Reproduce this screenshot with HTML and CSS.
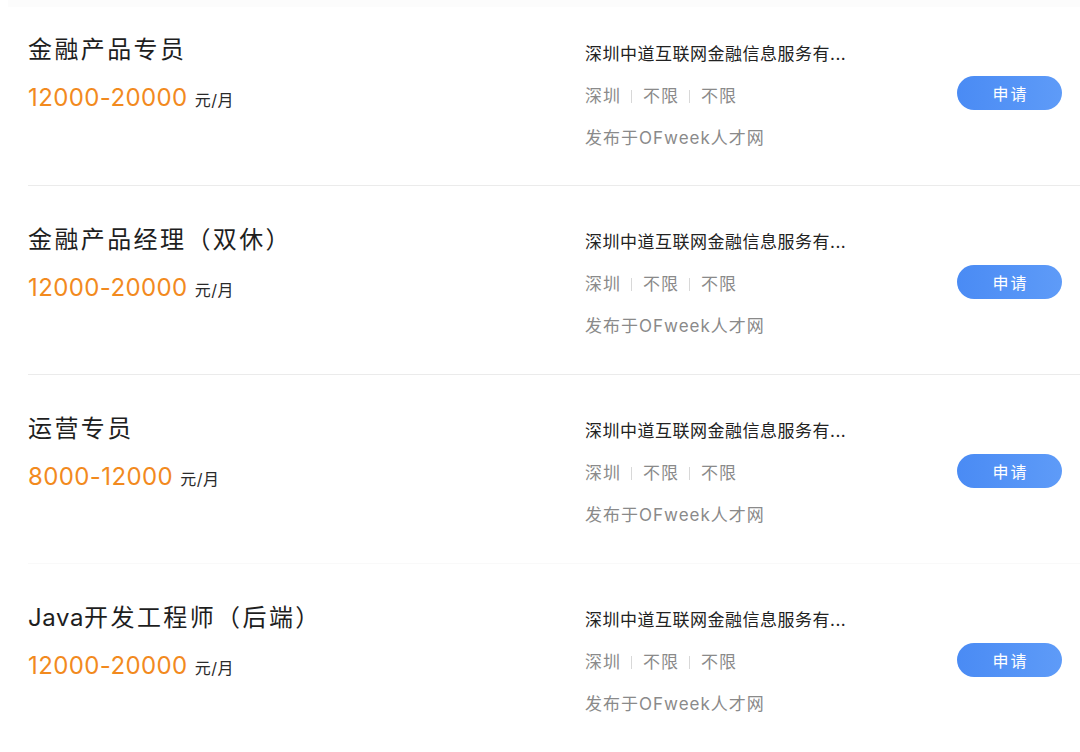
FILE: index.html
```html
<!DOCTYPE html>
<html lang="zh-CN">
<head>
<meta charset="utf-8">
<title>职位列表</title>
<link rel="stylesheet" href="styles.css">
</head>
<body>
<div class="topline"></div>
<ul class="list">
  <li class="row first">
    <div class="left">
      <div class="title">金融产品专员</div>
      <div class="salary"><span class="amount">12000-20000</span><span class="unit">元/月</span></div>
    </div>
    <div class="right">
      <div class="company">深圳中道互联网金融信息服务有...</div>
      <div class="meta"><span>深圳</span><i class="sep"></i><span>不限</span><i class="sep"></i><span>不限</span></div>
      <div class="meta">发布于OFweek人才网</div>
    </div>
    <button class="apply">申请</button>
  </li>
  <li class="row">
    <div class="left">
      <div class="title">金融产品经理（双休）</div>
      <div class="salary"><span class="amount">12000-20000</span><span class="unit">元/月</span></div>
    </div>
    <div class="right">
      <div class="company">深圳中道互联网金融信息服务有...</div>
      <div class="meta"><span>深圳</span><i class="sep"></i><span>不限</span><i class="sep"></i><span>不限</span></div>
      <div class="meta">发布于OFweek人才网</div>
    </div>
    <button class="apply">申请</button>
  </li>
  <li class="row faint">
    <div class="left">
      <div class="title">运营专员</div>
      <div class="salary"><span class="amount">8000-12000</span><span class="unit">元/月</span></div>
    </div>
    <div class="right">
      <div class="company">深圳中道互联网金融信息服务有...</div>
      <div class="meta"><span>深圳</span><i class="sep"></i><span>不限</span><i class="sep"></i><span>不限</span></div>
      <div class="meta">发布于OFweek人才网</div>
    </div>
    <button class="apply">申请</button>
  </li>
  <li class="row">
    <div class="left">
      <div class="title"><span class="latin">Java</span>开发工程师（后端）</div>
      <div class="salary"><span class="amount">12000-20000</span><span class="unit">元/月</span></div>
    </div>
    <div class="right">
      <div class="company">深圳中道互联网金融信息服务有...</div>
      <div class="meta"><span>深圳</span><i class="sep"></i><span>不限</span><i class="sep"></i><span>不限</span></div>
      <div class="meta">发布于OFweek人才网</div>
    </div>
    <button class="apply">申请</button>
  </li>
</ul>
</body>
</html>
```
FILE: styles.css
```css
html, body {
  margin: 0;
  padding: 0;
  background: #ffffff;
  overflow: hidden;
}
body {
  width: 1080px;
  height: 752px;
  font-family: Inter, "Noto Sans CJK SC", sans-serif;
  position: relative;
}
.topline {
  position: absolute;
  left: 8px;
  right: 0;
  top: 0;
  height: 7px;
  background: #fcfcfc;
}
.list {
  list-style: none;
  margin: 0;
  padding: 0;
  position: relative;
}
.row {
  display: flex;
  align-items: flex-start;
  margin-left: 28px;
  padding-right: 18px;
  height: 188px;
  border-bottom: 1px solid #ebebeb;
  box-sizing: content-box;
}
.row.first {
  height: 185px;
}
.row.first .left { padding-top: 34px; }
.row.first .right { padding-top: 42px; }
.row.first .apply { margin-top: 76px; }
.row.faint {
  border-bottom-color: #f9f9f9;
}
.left {
  width: 557px;
  padding-top: 38px;
  display: flex;
  flex-direction: column;
  gap: 16px;
}
.title {
  font-size: 24px;
  line-height: 32px;
  color: #1e1e1e;
  letter-spacing: 2.4px;
}
.latin {
  letter-spacing: 0.6px;
}
.salary {
  line-height: 32px;
  display: flex;
  align-items: baseline;
}
.amount {
  font-size: 24px;
  color: #f28a1e;
  letter-spacing: 0.4px;
}
.unit {
  font-size: 16px;
  color: #2a2a2a;
  margin-left: 7px;
  letter-spacing: 0.5px;
}
.right {
  flex: 1;
  padding-top: 44px;
  display: flex;
  flex-direction: column;
  gap: 18px;
}
.company {
  font-size: 17px;
  line-height: 24px;
  color: #222222;
  letter-spacing: 0.5px;
}
.meta {
  font-size: 17px;
  line-height: 24px;
  color: #8a8a8a;
  display: flex;
  align-items: center;
  letter-spacing: 1px;
}
.sep {
  display: inline-block;
  width: 1px;
  height: 13px;
  background: #d8d8d8;
  margin: 0 11px 0 10px;
}
.apply {
  margin-top: 79px;
  width: 105px;
  height: 34px;
  border: none;
  border-radius: 17px;
  background: linear-gradient(90deg, #4a8bf4, #5e9bf8);
  color: #ffffff;
  font-family: "Noto Sans CJK SC", sans-serif;
  font-size: 16px;
  letter-spacing: 2px;
  padding: 0 0 0 2px;
  cursor: pointer;
}
```
